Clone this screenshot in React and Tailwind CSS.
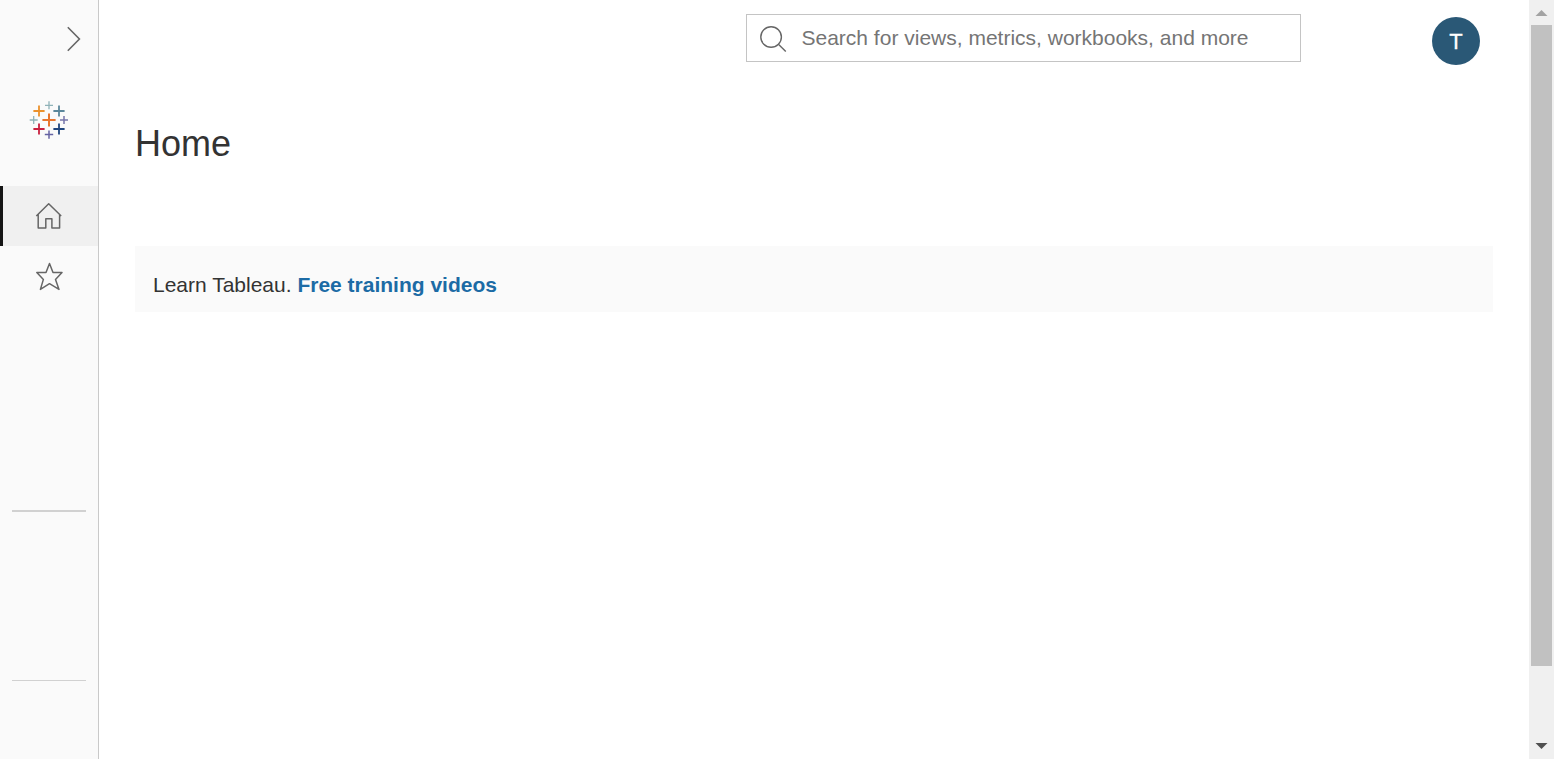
const LOGO = [
  { x: 21, y: 21, r: 6.6, w: 2, c: '#e8762d' },
  { x: 11, y: 12, r: 5.6, w: 1.8, c: '#eb912c' },
  { x: 31, y: 12, r: 5.6, w: 1.8, c: '#5b879b' },
  { x: 11, y: 30, r: 5.6, w: 1.8, c: '#c8203f' },
  { x: 31, y: 30, r: 5.6, w: 1.8, c: '#1f457e' },
  { x: 21, y: 6.3, r: 4, w: 1.3, c: '#8fb2b8' },
  { x: 5.7, y: 21, r: 4, w: 1.3, c: '#8fb2b8' },
  { x: 36, y: 21, r: 4, w: 1.5, c: '#7775ab' },
  { x: 21, y: 35.6, r: 4.2, w: 1.5, c: '#6563a3' },
];

function Logo() {
  return (
    <svg width="42" height="42" viewBox="0 0 42 42">
      {LOGO.map(({ x, y, r, w, c }) => (
        <path key={`${x}-${y}`} d={`M${x - r} ${y}h${2 * r}M${x} ${y - r}v${2 * r}`} stroke={c} strokeWidth={w} />
      ))}
    </svg>
  );
}

function Sidebar() {
  return (
    <nav className="flex w-[99px] shrink-0 flex-col border-r border-[#c9c9c9] bg-[#fafafa]">
      <button className="mt-6 flex h-[30px] justify-end pr-[15px]">
        <svg width="18" height="30" viewBox="0 0 18 30" fill="none" stroke="#666" strokeWidth="1.6">
          <path d="M2.8 3.3L14.4 15L2.8 26.7" />
        </svg>
      </button>
      <div className="mt-[45px] flex justify-center">
        <Logo />
      </div>
      <a className="mt-[45px] flex h-[60px] items-center justify-center border-l-3 border-[#151515] bg-[#f0f0f0] pr-[3px]">
        <svg width="30" height="30" viewBox="0 0 30 30" fill="none" stroke="#666" strokeWidth="1.5" strokeLinejoin="round">
          <path d="M2.3 15L14.7 2.7L27.2 15M4.2 13.2V27H11.8V17.7H17.9V27H25.6V13.4" />
        </svg>
      </a>
      <a className="flex h-[60px] items-center justify-center">
        <svg width="30" height="30" viewBox="0 0 30 30" fill="none" stroke="#666" strokeWidth="1.5" strokeLinejoin="round">
          <path d="M15.5 2.4L19 11.6H28L21.5 18.4L25 28.4L15.5 22.7L6.4 28.4L9.4 18.4L2.8 11.6H12Z" />
        </svg>
      </a>
      <div className="mx-3 mt-[204px] h-0.5 bg-[#d1d1d1]" />
      <div className="mx-3 mt-[168px] h-px bg-[#d1d1d1]" />
    </nav>
  );
}

function Header() {
  return (
    <header className="flex h-[66px] items-start justify-end pt-3.5 pr-[49px]">
      <div className="mr-[131px] flex h-12 w-[555px] items-center border border-[#c4c4c4] bg-white pl-3">
        <svg className="mt-0.5 shrink-0" width="30" height="30" viewBox="0 0 30 30" fill="none" stroke="#666" strokeWidth="1.4">
          <circle cx="12.1" cy="13" r="10.3" />
          <path d="M19.4 20.2L26.8 27.4" />
        </svg>
        <span className="ml-[12.5px] text-[21px] leading-[30px] whitespace-nowrap text-[#757575]">
          Search for views, metrics, workbooks, and more
        </span>
      </div>
      <div className="mt-[3px] flex size-12 items-center justify-center rounded-full bg-[#2a5876] pt-0.5 text-[22px] leading-6 text-white [-webkit-text-stroke:0.3px_white]">
        T
      </div>
    </header>
  );
}

function Scrollbar() {
  return (
    <div className="flex w-[25px] shrink-0 flex-col items-center bg-[#f0f0f0]">
      <svg className="shrink-0" width="25" height="25" viewBox="0 0 25 25">
        <path d="M6.5 16L12.5 10L18.5 16Z" fill="#a3a3a3" />
      </svg>
      <div className="mr-0.5 ml-0.5 h-[641px] self-stretch bg-[#c1c1c1]" />
      <svg className="mt-auto shrink-0" width="25" height="25" viewBox="0 0 25 25">
        <path d="M6.5 9L12.5 15L18.5 9Z" fill="#505050" />
      </svg>
    </div>
  );
}

export default function App() {
  return (
    <div className="flex h-[759px] w-[1554px] overflow-hidden bg-white font-['Liberation_Sans',Arial,sans-serif] text-[#333]">
      <Sidebar />
      <main className="flex min-w-0 grow flex-col">
        <Header />
        <h1 className="mt-[57px] ml-9 text-[36px] leading-[42px]">Home</h1>
        <section className="mt-[81px] mr-9 ml-9 flex h-[66px] items-center bg-[#fafafa] pt-3 pl-[18px] text-[21px] leading-[30px]">
          <p>
            Learn Tableau. <a className="font-bold text-[#1c6ba5]">Free training videos</a>
          </p>
        </section>
      </main>
      <Scrollbar />
    </div>
  );
}
